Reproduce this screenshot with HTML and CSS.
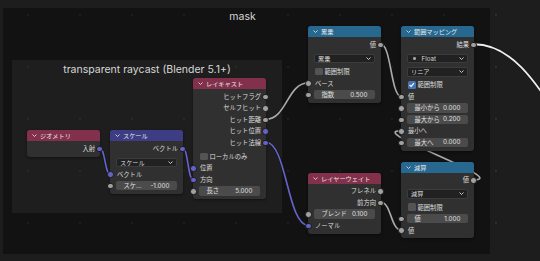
FILE: index.html
```html
<!DOCTYPE html>
<html lang="ja">
<head>
    <meta charset="UTF-8">
    <title>mask</title>
    <link rel="stylesheet" href="styles.css">
</head>
<body>
    <div class="canvas">
        <div class="frame frame-mask"><div class="frame-title">mask</div></div>
        <div class="frame frame-ray"><div class="frame-title">transparent raycast (Blender 5.1+)</div></div>

        <!-- リンク -->
        <svg class="wires" width="540" height="261" viewBox="0 0 540 261">
            <g class="wire-bg">
                <path d="M100,148.25 C105,148.25 105,174 110,174"/>
                <path d="M183,148.25 C188,148.25 188,179.75 193,179.75"/>
                <path d="M266,119.25 C286.5,119.25 287.5,83 308,83"/>
                <path d="M266,142.25 C286.5,142.25 287.5,225.25 308,225.25"/>
                <path d="M381,44.25 C391,44.25 391,96.25 401,96.25"/>
                <path d="M381,202.25 C391,202.25 391,230 401,230"/>
                <path d="M474,179.75 C510.5,179.75 364.5,130.75 401,130.75"/>
                <path d="M474,44.25 C520,44.25 545,100 580,150"/>
            </g>
            <path class="wire vec" d="M100,148.25 C105,148.25 105,174 110,174"/>
            <path class="wire vec" d="M183,148.25 C188,148.25 188,179.75 193,179.75"/>
            <path class="wire" d="M266,119.25 C286.5,119.25 287.5,83 308,83"/>
            <path class="wire vec" d="M266,142.25 C286.5,142.25 287.5,225.25 308,225.25"/>
            <path class="wire" d="M381,44.25 C391,44.25 391,96.25 401,96.25"/>
            <path class="wire" d="M381,202.25 C391,202.25 391,230 401,230"/>
            <path class="wire" d="M474,179.75 C510.5,179.75 364.5,130.75 401,130.75"/>
            <path class="wire hi" d="M474,44.25 C520,44.25 545,100 580,150"/>
        </svg>

        <!-- ジオメトリ -->
        <div class="node n-geo">
            <div class="hd input"><svg class="chev" viewBox="0 0 5 3"><polyline points="0.5,0.5 2.5,2.5 4.5,0.5"/></svg>ジオメトリ</div>
            <div class="bd">
                <div class="row out">入射<i class="sk vec"></i></div>
            </div>
        </div>

        <!-- スケール -->
        <div class="node n-scale">
            <div class="hd vector"><svg class="chev" viewBox="0 0 5 3"><polyline points="0.5,0.5 2.5,2.5 4.5,0.5"/></svg>スケール</div>
            <div class="bd">
                <div class="row out">ベクトル<i class="sk vec"></i></div>
                <div class="select">スケール<svg class="chev dd" viewBox="0 0 5 3"><polyline points="0.5,0.5 2.5,2.5 4.5,0.5"/></svg></div>
                <div class="row in"><i class="sk vec"></i>ベクトル</div>
                <div class="row field"><i class="sk"></i><div class="slider"><span>スケ...</span><span>-1.000</span></div></div>
            </div>
        </div>

        <!-- レイキャスト -->
        <div class="node n-ray">
            <div class="hd input"><svg class="chev" viewBox="0 0 5 3"><polyline points="0.5,0.5 2.5,2.5 4.5,0.5"/></svg>レイキャスト</div>
            <div class="bd">
                <div class="row out">ヒットフラグ<i class="sk"></i></div>
                <div class="row out">セルフヒット<i class="sk"></i></div>
                <div class="row out">ヒット距離<i class="sk"></i></div>
                <div class="row out">ヒット位置<i class="sk vec"></i></div>
                <div class="row out">ヒット法線<i class="sk vec"></i></div>
                <div class="row check"><span class="box"></span>ローカルのみ</div>
                <div class="row in"><i class="sk vec"></i>位置</div>
                <div class="row in"><i class="sk vec"></i>方向</div>
                <div class="row field"><i class="sk"></i><div class="slider"><span>長さ</span><span>5.000</span></div></div>
            </div>
        </div>

        <!-- 累乗 -->
        <div class="node n-pow">
            <div class="hd conv"><svg class="chev" viewBox="0 0 5 3"><polyline points="0.5,0.5 2.5,2.5 4.5,0.5"/></svg>累乗</div>
            <div class="bd">
                <div class="row out">値<i class="sk"></i></div>
                <div class="select">累乗<svg class="chev dd" viewBox="0 0 5 3"><polyline points="0.5,0.5 2.5,2.5 4.5,0.5"/></svg></div>
                <div class="row check"><span class="box"></span>範囲制限</div>
                <div class="row in"><i class="sk"></i>ベース</div>
                <div class="row field"><i class="sk"></i><div class="slider"><span>指数</span><span>0.500</span></div></div>
            </div>
        </div>

        <!-- 範囲マッピング -->
        <div class="node n-map">
            <div class="hd conv"><svg class="chev" viewBox="0 0 5 3"><polyline points="0.5,0.5 2.5,2.5 4.5,0.5"/></svg>範囲マッピング</div>
            <div class="bd">
                <div class="row out">結果<i class="sk"></i></div>
                <div class="select"><i class="dot"></i>Float<svg class="chev dd" viewBox="0 0 5 3"><polyline points="0.5,0.5 2.5,2.5 4.5,0.5"/></svg></div>
                <div class="select">リニア<svg class="chev dd" viewBox="0 0 5 3"><polyline points="0.5,0.5 2.5,2.5 4.5,0.5"/></svg></div>
                <div class="row check"><span class="box on"><svg viewBox="0 0 8 8"><polyline points="1.6,4.2 3.3,5.8 6.4,2.2"/></svg></span>範囲制限</div>
                <div class="row in"><i class="sk"></i>値</div>
                <div class="row field"><i class="sk"></i><div class="slider"><span>最小から</span><span>0.000</span></div></div>
                <div class="row field"><i class="sk"></i><div class="slider"><span>最大から</span><span>0.200</span></div></div>
                <div class="row in"><i class="sk"></i>最小へ</div>
                <div class="row field"><i class="sk"></i><div class="slider"><span>最大へ</span><span>0.000</span></div></div>
            </div>
        </div>

        <!-- レイヤーウェイト -->
        <div class="node n-lw">
            <div class="hd input"><svg class="chev" viewBox="0 0 5 3"><polyline points="0.5,0.5 2.5,2.5 4.5,0.5"/></svg>レイヤーウェイト</div>
            <div class="bd">
                <div class="row out">フレネル<i class="sk"></i></div>
                <div class="row out">前方向<i class="sk"></i></div>
                <div class="row field"><i class="sk"></i><div class="slider"><span>ブレンド</span><span>0.100</span></div></div>
                <div class="row in"><i class="sk vec"></i>ノーマル</div>
            </div>
        </div>

        <!-- 減算 -->
        <div class="node n-sub">
            <div class="hd conv"><svg class="chev" viewBox="0 0 5 3"><polyline points="0.5,0.5 2.5,2.5 4.5,0.5"/></svg>減算</div>
            <div class="bd">
                <div class="row out">値<i class="sk"></i></div>
                <div class="select">減算<svg class="chev dd" viewBox="0 0 5 3"><polyline points="0.5,0.5 2.5,2.5 4.5,0.5"/></svg></div>
                <div class="row check"><span class="box"></span>範囲制限</div>
                <div class="row field"><i class="sk"></i><div class="slider"><span>値</span><span>1.000</span></div></div>
                <div class="row in"><i class="sk"></i>値</div>
            </div>
        </div>
    </div>
</body>
</html>
```

FILE: styles.css
```css
body {
    margin: 0;
    overflow: hidden;
    background-color: #1d1d1d;
    font-family: 'Inter', 'Noto Sans CJK JP', sans-serif;
}
.canvas {
    position: relative;
    width: 540px;
    height: 261px;
    overflow: hidden;
    background-image: radial-gradient(circle, #2e2e2e 0.8px, transparent 1.3px);
    background-size: 52px 52px;
    background-position: 2px -11px;
}

/* フレーム */
.frame {
    position: absolute;
    box-sizing: border-box;
}
.frame-mask {
    left: 3px;
    top: 8px;
    width: 487px;
    height: 246px;
    background-color: rgba(0, 0, 0, 0.36);
}
.frame-mask .frame-title {
    padding: 2.5px 8px 0 0;
    line-height: 12px;
    font-size: 10.5px;
    text-align: center;
    color: #d6d6d6;
}
.frame-ray {
    left: 12px;
    top: 60px;
    width: 270px;
    height: 153px;
    background-color: rgba(255, 255, 255, 0.05);
}
.frame-ray .frame-title {
    padding-top: 3.5px;
    line-height: 12px;
    font-size: 10.5px;
    text-align: center;
    color: #d6d6d6;
}

/* リンク */
.wires {
    position: absolute;
    left: 0;
    top: 0;
}
.wires path {
    fill: none;
}
.wire-bg path {
    stroke: #151515;
    stroke-width: 3;
}
.wire {
    stroke: #ababab;
    stroke-width: 1.6;
}
.wire.vec {
    stroke: #6464cc;
}
.wire.hi {
    stroke: #eeeeee;
    stroke-width: 1.8;
}

/* ノード */
.node {
    position: absolute;
    width: 73px;
    background-color: #303030;
    border-radius: 3px;
    box-shadow: 0 1px 3px rgba(0, 0, 0, 0.45);
}
.n-geo { left: 27px; top: 130px; }
.n-scale { left: 110px; top: 130px; }
.n-ray { left: 193px; top: 78px; }
.n-pow { left: 308px; top: 26px; }
.n-map { left: 401px; top: 26px; }
.n-lw { left: 308px; top: 172.5px; }
.n-sub { left: 401px; top: 161.5px; }

.hd {
    height: 11px;
    display: flex;
    align-items: center;
    gap: 3px;
    padding-left: 5px;
    border-radius: 3px 3px 0 0;
    font-size: 6.2px;
    color: #e8e8e8;
}
.hd.input { background-color: #82304c; }
.hd.vector { background-color: #3d3d85; }
.hd.conv { background-color: #266890; }

.chev {
    width: 5px;
    height: 3px;
}
.chev polyline {
    fill: none;
    stroke: #d8d8d8;
    stroke-width: 0.9;
}
.chev.dd {
    margin-left: auto;
}

.bd {
    padding: 1.5px 0 2.5px;
}
.row {
    position: relative;
    height: 11.5px;
    display: flex;
    align-items: center;
    font-size: 6.3px;
    color: #dcdcdc;
}
.row.out {
    justify-content: flex-end;
    padding-right: 5px;
}
.row.in {
    padding-left: 7px;
}
.row.check {
    margin-top: 2.5px;
    padding-left: 7px;
    gap: 2px;
}

/* ソケット */
.sk {
    position: absolute;
    top: 50%;
    width: 4.5px;
    height: 4.5px;
    margin-top: -2.75px;
    border-radius: 50%;
    background-color: #a1a1a1;
    border: 0.5px solid #1a1a1a;
}
.sk.vec {
    background-color: #6363c7;
}
.row.out .sk {
    right: -2.75px;
}
.row.in .sk,
.row.field .sk {
    left: -2.75px;
}

/* プルダウン */
.select {
    height: 9.75px;
    margin: 3.5px 6px 1px;
    padding: 0 3px;
    box-sizing: border-box;
    display: flex;
    align-items: center;
    background-color: #212121;
    border: 0.5px solid #3c3c3c;
    border-radius: 2px;
    font-size: 6.2px;
    color: #dcdcdc;
}
.select .dot {
    width: 2.5px;
    height: 2.5px;
    margin: 0 6px 0 2px;
    border-radius: 50%;
    background-color: #a1a1a1;
}

/* チェックボックス */
.box {
    width: 7.5px;
    height: 7.5px;
    border-radius: 1.5px;
    background-color: #545454;
}
.box.on {
    background-color: #4772b3;
}
.box svg {
    display: block;
    width: 7.5px;
    height: 7.5px;
}
.box polyline {
    fill: none;
    stroke: #ffffff;
    stroke-width: 1.2;
}

/* スライダー */
.slider {
    flex: 1;
    height: 9.5px;
    margin: 0 6px;
    padding: 0 7.5px;
    display: flex;
    align-items: center;
    justify-content: space-between;
    background-color: #4b4b4b;
    border-radius: 2px;
    font-size: 6.3px;
    color: #e0e0e0;
}
```
